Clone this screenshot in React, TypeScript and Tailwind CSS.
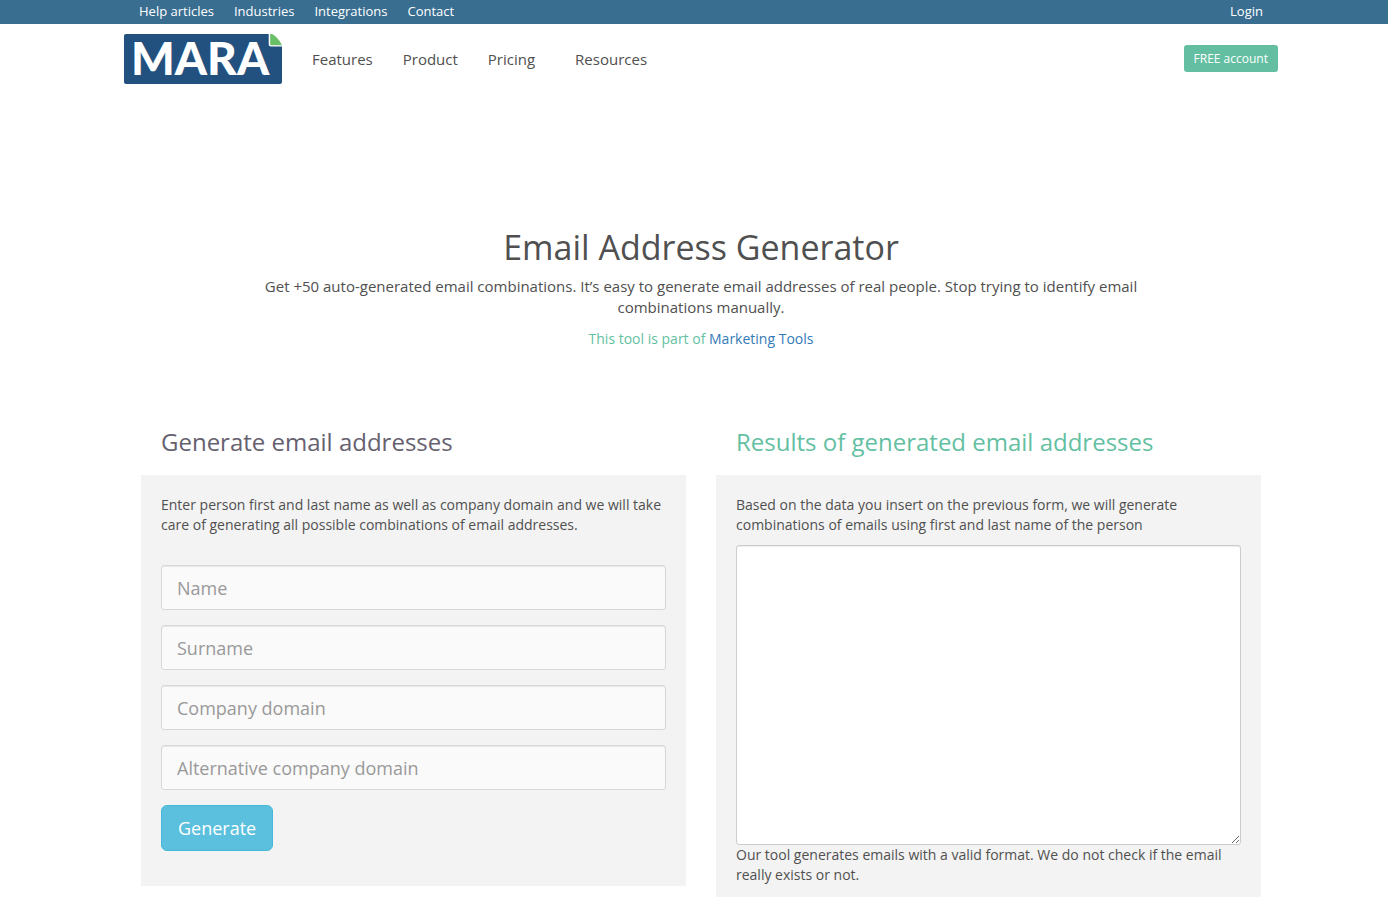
import React, { useState } from 'react'

type NavLink = {
  label: string;
  href: string;
}

const topLinks: NavLink[] = [
  { label: 'Help articles', href: '#help' },
  { label: 'Industries', href: '#industries' },
  { label: 'Integrations', href: '#integrations' },
  { label: 'Contact', href: '#contact' },
]

const fields = [
  { id: 'name', label: 'Name' },
  { id: 'surname', label: 'Surname' },
  { id: 'domain', label: 'Company domain' },
  { id: 'altDomain', label: 'Alternative company domain' },
]

const Logo = () => (
  <svg width="158" height="50" viewBox="0 0 158 50" role="img" aria-label="MARA" className="overflow-visible">
    <path d="M2 0H144.7V10.5Q144.7 12.6 147 12.6H158V48Q158 50 156 50H2Q0 50 0 48V2Q0 0 2 0Z" fill="#225180" />
    <path d="M146.2 0H148C152 2 155.5 6 158 11.3H147Q146.2 11.3 146.2 10.5Z" fill="#6abf69" />
    <text x="7" y="41" fontFamily="Lato, sans-serif" fontWeight="900" fontSize="46" fill="#fff">MARA</text>
  </svg>
)

const TopBar = () => (
  <div className="bg-[#396e91] pb-[2px] pl-[14px] text-[13px] leading-[22px] text-white">
    <div className="mx-auto flex max-w-[1124px] justify-between">
      <nav className="flex gap-5">
        {topLinks.map((l) => (
          <a key={l.label} href={l.href} className="hover:underline">{l.label}</a>
        ))}
      </nav>
      <a href="#login" className="hover:underline">Login</a>
    </div>
  </div>
)

const Header = () => (
  <header className="pl-[14px]">
    <div className="mx-auto flex max-w-[1154px] items-start pt-[10px]">
      <a href="#home"><Logo /></a>
      <nav className="flex pl-[30px] pt-[15px] text-[15px] leading-[21px]">
        <a href="#features" className="mr-[30px]">Features</a>
        <a href="#product" className="mr-[30px]">Product</a>
        <a href="#pricing" className="mr-10">Pricing</a>
        <a href="#resources">Resources</a>
      </nav>
      <a href="#signup" className="ml-auto mt-[11px] rounded-[3px] bg-[#64bfa2] px-[10px] py-[5px] text-[12px] leading-[17px] text-white">
        FREE account
      </a>
    </div>
  </header>
)

export default function App() {
  const [values, setValues] = useState<Record<string, string>>({})
  const [results, setResults] = useState('')

  const generate = (e: React.FormEvent) => {
    e.preventDefault()
    const first = (values.name || '').trim().toLowerCase()
    const last = (values.surname || '').trim().toLowerCase()
    const domains = [values.domain, values.altDomain].filter(Boolean)
    if (!first || !last) return

    const users = [first, last, `${first}.${last}`, `${last}.${first}`, `${first}${last}`, `${first[0]}${last}`, `${first}_${last}`]
    setResults(domains.flatMap((d) => users.map((u) => `${u}@${d}`)).join('\n'))
  }

  return (
    <div className="bg-white font-['Open_Sans',sans-serif] text-sm text-[#505050]">
      <TopBar />
      <Header />
      <main className="pl-[14px]">
        <div className="mx-auto max-w-[1120px]">
          <section className="mx-auto max-w-[920px] pt-[142px] text-center">
            <h1 className="text-[34px] leading-[42px]">Email Address Generator</h1>
            <p className="mt-2 text-[15px] leading-[21px]">
              Get +50 auto-generated email combinations. It’s easy to generate email addresses of real people. Stop trying to identify email combinations manually.
            </p>
            <p className="mt-[11px] leading-5 text-[#64bfa2]">
              This tool is part of <a href="#tools" className="text-[#337ab7] hover:underline">Marketing Tools</a>
            </p>
          </section>

          <div className="mt-[77px] grid items-start gap-[30px] md:grid-cols-2">
            <section>
              <h2 className="px-5 text-2xl text-[#66616f]">Generate email addresses</h2>
              <form onSubmit={generate} className="mt-[17px] bg-[#f3f3f3] px-5 pt-5 pb-[35px]">
                <p className="leading-5">
                  Enter person first and last name as well as company domain and we will take care of generating all possible combinations of email addresses.
                </p>
                <div className="mt-[30px] mb-[15px] flex flex-col gap-[15px]">
                  {fields.map((f) => (
                    <input
                      key={f.id}
                      type="text"
                      name={f.id}
                      aria-label={f.label}
                      placeholder={f.label}
                      value={values[f.id] || ''}
                      onChange={(e) => setValues({ ...values, [f.id]: e.target.value })}
                      className="h-[45px] w-full rounded-[3px] border border-[#d8d8d8] bg-[#fafafa] px-[15px] text-lg shadow-[inset_0_1px_1px_rgba(0,0,0,0.075)] outline-none placeholder:text-[#999] focus:border-[#66afe9]"
                    />
                  ))}
                </div>
                <button type="submit" className="block cursor-pointer rounded-md border border-[#46b8da] bg-[#5bc0de] px-4 py-[10px] text-lg leading-6 text-white hover:bg-[#31b0d5]">
                  Generate
                </button>
              </form>
            </section>

            <section>
              <h2 className="px-5 text-2xl text-[#64bfa2]">Results of generated email addresses</h2>
              <div className="mt-[17px] bg-[#f3f3f3] px-5 pt-5 pb-3">
                <label htmlFor="results" className="block leading-5">
                  Based on the data you insert on the previous form, we will generate combinations of emails using first and last name of the person
                </label>
                <textarea
                  id="results"
                  value={results}
                  onChange={(e) => setResults(e.target.value)}
                  className="mt-[10px] block h-[300px] w-full rounded-[3px] border border-[#ccc] bg-white px-3 py-[6px] shadow-[inset_0_1px_1px_rgba(0,0,0,0.075)] outline-none"
                />
                <p className="leading-5">
                  Our tool generates emails with a valid format. We do not check if the email really exists or not.
                </p>
              </div>
            </section>
          </div>
        </div>
      </main>
    </div>
  )
}
